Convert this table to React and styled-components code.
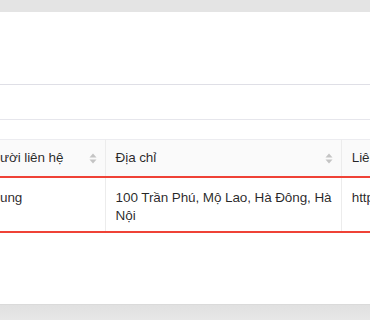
import React from 'react';
import styled, { createGlobalStyle } from 'styled-components';

const GlobalStyle = createGlobalStyle`
	html, body {
		margin: 0;
		padding: 0;
		background: #e4e4e4;
		font-family: "Liberation Sans", Arial, sans-serif;
		font-size: 13.5px;
		letter-spacing: -0.1px;
		color: rgba(0, 0, 0, 0.85);
	}
`

const Page = styled.div`
	width: 370px;
	height: 320px;
	overflow: hidden;
	display: flex;
	flex-direction: column;
	background: linear-gradient(#e4e4e4, #e4e4e4 290px, #e0e0e0 304px, #e7e7e7 320px);
	padding-top: 12px;
	box-sizing: border-box;
`

const Panel = styled.div`
	background: #fff;
	height: 293px;
	border-bottom: 1px solid #dadada;
	box-sizing: border-box;
	overflow: hidden;
`

const Toolbar = styled.div`
	height: 72px;
	border-bottom: 1px solid #dfdfe6;
`

const FilterBar = styled.div`
	height: 34px;
	border-bottom: 1px solid #e6e6ec;
`

const TableWrap = styled.div`
	margin-top: 19px;
	overflow: hidden;
`

const Table = styled.table`
	margin-left: -27px;
	border-collapse: collapse;
	table-layout: fixed;
	width: 569px;
	border-top: 1px solid #ececf0;
`

const Th = styled.th`
	width: ${p => p.$width}px;
	background: #fafafa;
	font-weight: normal;
	text-align: left;
	padding: 9px 8px 9px 10px;
	line-height: 18px;
	border-right: 1px solid #ececec;
	box-sizing: border-box;
`

const HeadInner = styled.div`
	display: flex;
	align-items: center;
	justify-content: space-between;
	white-space: nowrap;
`

// highlighted row: red rule above and below
const Td = styled.td`
	padding: 11px 8px 6px 10px;
	line-height: 18px;
	vertical-align: top;
	border-right: 1px solid #ececec;
	border-top: 2px solid ${p => (p.$active ? '#ef4236' : '#ececec')};
	border-bottom: 2px solid ${p => (p.$active ? '#ef4236' : '#ececec')};
	white-space: ${p => (p.$nowrap ? 'nowrap' : 'normal')};
	overflow: hidden;
`

const Sorter = () => (
	<svg width="8" height="11" viewBox="0 0 8 11">
		<path d="M4 0.5 L7.5 4.5 L0.5 4.5 Z" fill="#c4c4c4" />
		<path d="M4 10.5 L7.5 6.5 L0.5 6.5 Z" fill="#c4c4c4" />
	</svg>
)

const columns = [
	{ title: 'Người liên hệ', width: 132, sort: true },
	{ title: 'Địa chỉ', width: 236, sort: true },
	{ title: 'Liên hệ', width: 200, sort: false },
]

const App = () => (
	<>
		<GlobalStyle />
		<Page>
			<Panel>
				<Toolbar />
				<FilterBar />
				<TableWrap>
					<Table>
						<thead>
							<tr>
								{columns.map(col => (
									<Th key={col.title} $width={col.width}>
										<HeadInner>
											<span>{col.title}</span>
											{col.sort && <Sorter />}
										</HeadInner>
									</Th>
								))}
							</tr>
						</thead>
						<tbody>
							<tr>
								<Td $active>Nhung</Td>
								<Td $active>100 Trần Phú, Mộ Lao, Hà Đông, Hà Nội</Td>
								<Td $active $nowrap>https://facebook.com/nhung</Td>
							</tr>
						</tbody>
					</Table>
				</TableWrap>
			</Panel>
		</Page>
	</>
)

export default App;
